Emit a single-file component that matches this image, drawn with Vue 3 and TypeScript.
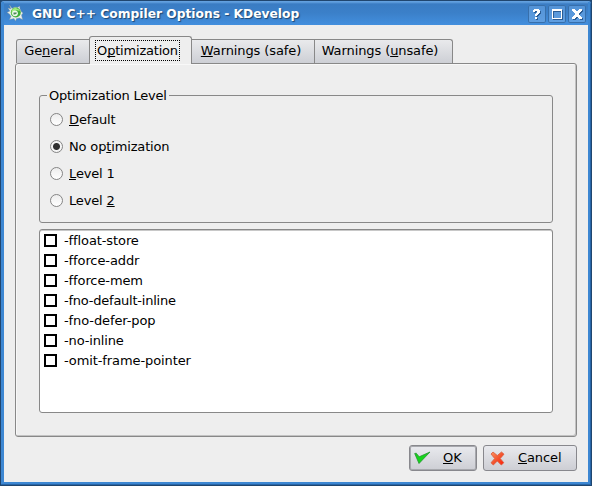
<script setup lang="ts">
import { ref } from 'vue'

// Each label is split into [before, accelerator, after]
type Label = [string, string, string]

const tabs: { id: string; label: Label }[] = [
  { id: 'general', label: ['Ge', 'n', 'eral'] },
  { id: 'optimization', label: ['O', 'p', 'timization'] },
  { id: 'safe', label: ['', 'W', 'arnings (safe)'] },
  { id: 'unsafe', label: ['Warnings (', 'u', 'nsafe)'] },
]
const activeTab = ref('optimization')

const levels: { id: string; label: Label }[] = [
  { id: 'default', label: ['', 'D', 'efault'] },
  { id: 'none', label: ['No op', 't', 'imization'] },
  { id: 'one', label: ['', 'L', 'evel 1'] },
  { id: 'two', label: ['Level ', '2', ''] },
]
const level = ref('none')

const flags = ref(
  ['-ffloat-store', '-fforce-addr', '-fforce-mem', '-fno-default-inline', '-fno-defer-pop', '-no-inline', '-omit-frame-pointer']
    .map((name) => ({ name, on: false })),
)
</script>

<template>
  <div class="window">
    <header class="titlebar">
      <svg class="app-icon" width="16" height="16" viewBox="0 0 16 16">
        <path d="M2.500 0l2.500 3.500 3-1.500 3 .5L12.500 1l.5 3 1.500 3 1.500 1-1.500 2 1 4.500-3-1.500-3 .5L8.500 16 7 13.500l-4.500 1L4 11.500 2.500 9 0 7.500 3 6 1 3l3 1z" fill="#e9efec" stroke="#8799a0" stroke-width=".4" />
        <circle cx="8.800" cy="7.500" r="5" fill="#3fae38" />
        <path d="M5.500 4a5 5 0 0 1 7.500 2l-3-.8-3 .8-2.500 3q-.5-3 1-5z" fill="#a0ec7c" />
        <circle cx="8" cy="8.300" r="2.900" fill="#eef9ec" />
        <path d="M6.500 7.500h3.200v1L8 9.500H6.500z" fill="#4b8a57" />
      </svg>
      <h1>GNU C++ Compiler Options - KDevelop</h1>
      <div class="controls">
        <span class="control">
          <svg width="18" height="18" shape-rendering="crispEdges">
            <path class="shade" d="M6 6h2V5h4v1h1v3h-1v1h-1v1h-1v1H8v-2h1V9h1V7H8v1H6zM8 13h2v2H8z" />
            <path class="glyph" d="M5 5h1V4h5v1h1v3h-1v1h-1v1H9v1H7V9h1V8h1V6H7v1H5zM7 12h2v2H7z" />
          </svg>
        </span>
        <span class="control">
          <svg width="18" height="18" shape-rendering="crispEdges">
            <path class="shade" fill-rule="evenodd" d="M5 5h10v10H5zM6 7v7h8V7z" />
            <path class="glyph" fill-rule="evenodd" d="M4 4h10v10H4zM5 6v7h8V6z" />
          </svg>
        </span>
        <span class="control">
          <svg width="18" height="18" shape-rendering="crispEdges">
            <path class="shade" d="M5 5h3v1h1v1h2V6h1V5h3v2h-1v1h-1v1h-1v2h1v1h1v1h1v2h-3v-1h-1v-1H9v1H8v1H5v-2h1v-1h1v-1h1V9H7V8H6V7H5z" />
            <path class="glyph" d="M4 4h3v1h1v1h2V5h1V4h3v2h-1v1h-1v1h-1v2h1v1h1v1h1v2h-3v-1h-1v-1H8v1H7v1H4v-2h1v-1h1v-1h1V8H6V7H5V6H4z" />
          </svg>
        </span>
      </div>
    </header>

    <main>
      <nav class="tabs">
        <button v-for="t in tabs" :key="t.id" class="tab" :class="[t.id, { active: activeTab === t.id }]" @click="activeTab = t.id">
          <span class="text">{{ t.label[0] }}<u>{{ t.label[1] }}</u>{{ t.label[2] }}</span>
        </button>
      </nav>
      <section class="panel">
        <fieldset class="group">
          <legend>Optimization Level</legend>
          <label v-for="l in levels" :key="l.id" class="radio">
            <input v-model="level" type="radio" name="level" :value="l.id">
            <span>{{ l.label[0] }}<u>{{ l.label[1] }}</u>{{ l.label[2] }}</span>
          </label>
        </fieldset>
        <div class="list">
          <label v-for="f in flags" :key="f.name" class="flag" :class="f.name.slice(1)">
            <input v-model="f.on" type="checkbox">
            <span>{{ f.name }}</span>
          </label>
        </div>
      </section>
      <footer class="actions">
        <button class="action ok">
          <svg width="17" height="14" viewBox="0 0 17 14">
            <path d="M.7 2.500l1.500-.3 3 3.600L16 1 5 12.500z" fill="#15d51b" stroke="#249331" stroke-width=".8" stroke-linejoin="round" />
          </svg>
          <span><u>O</u>K</span>
        </button>
        <button class="action cancel">
          <svg width="15" height="15" viewBox="0 0 15 15">
            <defs>
              <linearGradient id="red" x1="0" y1="0" x2="1" y2="1">
                <stop offset="0" stop-color="#ff9361" />
                <stop offset=".5" stop-color="#f4552f" />
                <stop offset="1" stop-color="#ff1b08" />
              </linearGradient>
            </defs>
            <path d="M1 3l2-2 4.300 3.500L11.500 1 14 3.200 10.200 7.500l3.600 4.200-2.500 2.300-4-4-4 4L1 11.800 4.700 7.500z" fill="url(#red)" stroke="#d75a3c" stroke-width=".8" stroke-linejoin="round" />
          </svg>
          <span><u>C</u>ancel</span>
        </button>
      </footer>
    </main>
  </div>
</template>

<style>
body {
  margin: 0;
  background: #20466f;
}
</style>

<style scoped>
* {
  box-sizing: border-box;
}
.window {
  width: 592px;
  height: 486px;
  display: flex;
  flex-direction: column;
  padding: 0 3px 3px;
  border: 1px solid #20466f;
  border-radius: 3px 3px 0 0;
  background: #3d87d2;
  box-shadow: inset 0 1px #62a0df, inset -1px -1px #2866a8;
  font: 13px/16px "DejaVu Sans", sans-serif;
  letter-spacing: -0.1px;
  color: #000;
}
.titlebar {
  height: 24px;
  flex: none;
  display: flex;
  align-items: center;
  padding: 0 2px 0 3px;
  background: linear-gradient(#62a0df 0 1px, #3a7cc3 3px, #3b80c9 12px, #438fde);
}
.app-icon {
  margin-bottom: 1px;
}
h1 {
  margin: 1px 0 0 9px;
  flex: 1;
  font: bold 12.250px/16px "DejaVu Sans", sans-serif;
  letter-spacing: 0;
  color: #fff;
  white-space: nowrap;
  text-shadow: 1px 1px 1px #1d4570;
}
.controls {
  display: flex;
  gap: 2px;
  margin-top: 1px;
}
.control {
  width: 18px;
  height: 18px;
  border-radius: 2px;
  background: linear-gradient(#5292d6, #609fe1);
  box-shadow: inset 0 0 0 1px #376fab;
}
.control svg {
  display: block;
}
.shade {
  fill: #2a5c94;
}
.glyph {
  fill: #fff;
}
main {
  flex: 1;
  display: flex;
  flex-direction: column;
  padding: 11px 11px 0;
  background: #eee;
}
.tabs {
  height: 27px;
  display: flex;
  align-items: flex-end;
  padding-left: 1px;
}
button {
  font: inherit;
  letter-spacing: inherit;
  color: inherit;
  padding: 0;
  white-space: nowrap;
}
.tab {
  height: 24px;
  border: 1px solid #888;
  border-left: 0;
  border-bottom: 0;
  background: linear-gradient(#e9eaec, #cdcfd5);
}
.tab .text {
  display: block;
  margin-top: -2px;
}
.general {
  width: 74px;
  border-left: 1px solid #888;
  border-radius: 3px 0 0;
}
.general .text {
  margin-left: -7px;
}
.optimization {
  width: 103px;
}
.safe {
  width: 123px;
}
.safe .text {
  margin-left: -4px;
}
.unsafe {
  width: 138px;
  border-radius: 0 3px 0 0;
}
.unsafe .text {
  margin-left: -7px;
}
.tab.active {
  height: 28px;
  position: relative;
  margin: 0 0 -1px -1px;
  border: 1px solid #888;
  border-bottom: 0;
  border-radius: 3px 3px 0 0;
  background: #eee;
}
.tab.active .text {
  width: 85px;
  height: 21px;
  line-height: 19px;
  margin: 0 0 0 5px;
  border: 1px dotted #000;
  letter-spacing: -0.2px;
}
.panel {
  height: 374px;
  padding: 25px 23px 0;
  border: 1px solid #888;
  border-radius: 3px;
  box-shadow: inset -1px -1px #c2c2c2, inset 1px 1px #f8f8f8;
}
.group {
  height: 134px;
  min-width: 0;
  margin: 0 0 6px;
  padding: 4px 10px 0;
  border: 1px solid #888;
  border-radius: 3px;
}
legend {
  margin-left: -3px;
  padding: 1px 2px 0;
  line-height: 12px;
  letter-spacing: -0.22px;
}
.radio {
  height: 27px;
  display: flex;
  align-items: center;
  gap: 6px;
  letter-spacing: -0.15px;
}
input {
  appearance: none;
  margin: 0;
  flex: none;
  width: 13px;
  height: 13px;
}
.radio input {
  border: 1px solid #858585;
  border-radius: 50%;
  background: linear-gradient(#ededed, #fff);
}
.radio input:checked {
  background: radial-gradient(circle, #303030 3px, #f5f5f5 4px);
}
.list {
  height: 184px;
  padding: 1px 4px;
  border: 1px solid #888;
  border-radius: 3px;
  background: #fff;
  box-shadow: inset 0 1px #c8c8c8;
}
.flag {
  height: 20px;
  display: flex;
  align-items: center;
  gap: 7px;
}
.flag input {
  margin-bottom: 1px;
  border: 2px solid #000;
}
.fno-default-inline {
  letter-spacing: -0.23px;
}
.no-inline {
  letter-spacing: -0.15px;
}
.flag input:checked {
  background: #000;
  background-clip: content-box;
  padding: 2px;
}
u {
  text-decoration: underline;
  text-decoration-thickness: 1px;
  text-underline-offset: 1px;
  text-decoration-skip-ink: none;
}
.actions {
  display: flex;
  gap: 6px;
  justify-content: flex-end;
  margin-top: 8px;
}
.action {
  height: 26px;
  display: flex;
  align-items: center;
  border: 1px solid #88888d;
  border-radius: 3px;
  background: linear-gradient(#e9eaee, #cdced4);
}
.ok {
  width: 68px;
  padding-left: 4px;
  gap: 12px;
  box-shadow: inset 0 0 0 1px #a7a8ad;
}
.cancel {
  width: 94px;
  padding-left: 6px;
  gap: 13px;
}
</style>
